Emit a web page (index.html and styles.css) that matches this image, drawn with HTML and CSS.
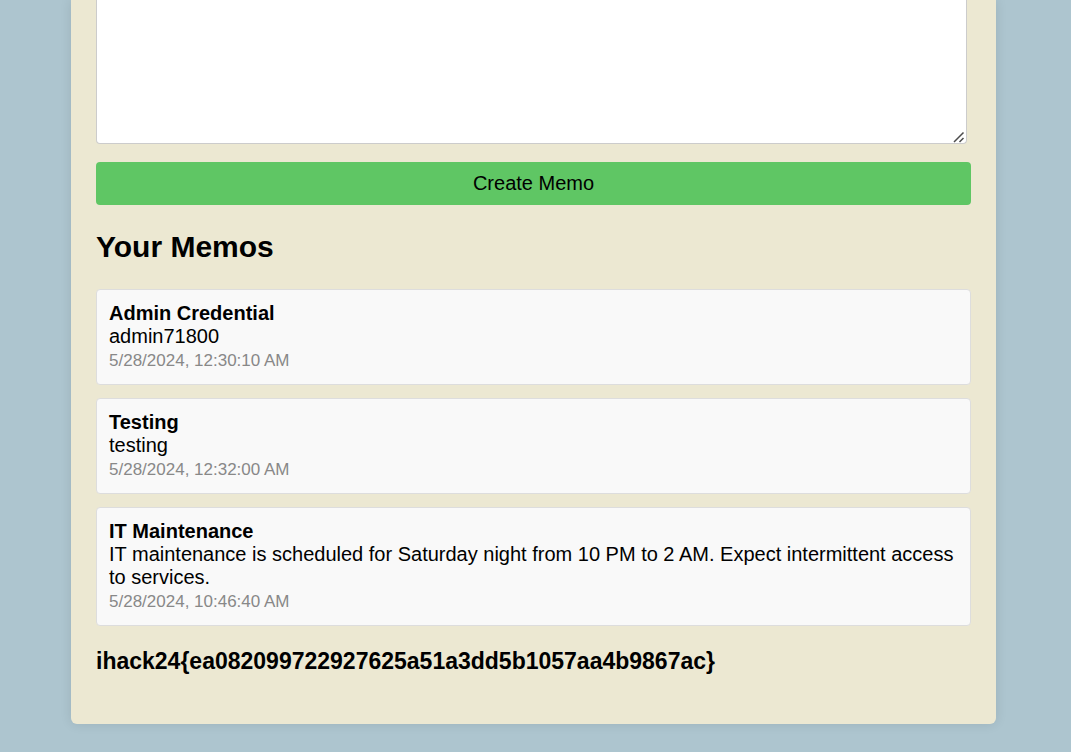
FILE: index.html
```html
<!DOCTYPE html>
<html lang="en">
<head>
<meta charset="utf-8">
<title>Memos</title>
<link rel="stylesheet" href="styles.css">
</head>
<body>
<main class="container">
  <form class="memo-form">
    <div class="memo-field">
      <textarea class="memo-input" aria-label="Memo content"></textarea>
      <svg class="memo-grip" viewBox="0 0 12 12" aria-hidden="true"><path d="M1 11 10.500 1.500M6.500 11 10.500 7" fill="none" stroke="#4c4c4c" stroke-width="1.500"/></svg>
    </div>
    <button class="create-button" type="button">Create Memo</button>
  </form>
  <h2 class="section-title">Your Memos</h2>
  <ul class="memo-list">
    <li class="memo"><strong class="memo-title">Admin Credential</strong><p class="memo-text">admin71800</p><small class="memo-date">5/28/2024, 12:30:10 AM</small></li>
    <li class="memo"><strong class="memo-title">Testing</strong><p class="memo-text">testing</p><small class="memo-date">5/28/2024, 12:32:00 AM</small></li>
    <li class="memo"><strong class="memo-title">IT Maintenance</strong><p class="memo-text">IT maintenance is scheduled for Saturday night from 10 PM to 2 AM. Expect intermittent access to services.</p><small class="memo-date">5/28/2024, 10:46:40 AM</small></li>
  </ul>
  <h3 class="flag">ihack24{ea082099722927625a51a3dd5b1057aa4b9867ac}</h3>
</main>
</body>
</html>
```
FILE: styles.css
```css
* { box-sizing: border-box; }
body {
  margin: 0;
  padding: 0 75px 28px 71px;
  background: #adc5cf;
  color: #000;
  font-family: "Liberation Sans", Arial, sans-serif;
  font-size: 20px;
  line-height: 23px;
}
.container {
  padding: 0 25px 50px;
  background: #ece8d2;
  border-radius: 0 0 6px 6px;
  box-shadow: 0 0 12px rgba(0, 0, 0, 0.1);
}
.memo-form { display: flex; flex-direction: column; gap: 18px; }
.memo-field { position: relative; margin-right: 4px; }
.memo-input {
  display: block;
  width: 100%;
  height: 144px;
  padding: 12px;
  border: 1px solid #ccc;
  border-top: 0;
  border-radius: 0 0 4px 4px;
  background: #fff;
  font: inherit;
  resize: vertical;
}
.memo-input::-webkit-resizer { background: transparent; }
.memo-grip {
  position: absolute;
  right: 2px;
  bottom: 1px;
  width: 12px;
  height: 12px;
  pointer-events: none;
}
.create-button {
  height: 43px;
  padding: 0;
  border: 0;
  border-radius: 4px;
  background: #5fc664;
  color: #000;
  font: inherit;
}
.section-title { margin: 24px 0; font-size: 30px; line-height: 36px; }
.memo-list { display: grid; gap: 13px; margin: 0; padding: 0; list-style: none; }
.memo {
  padding: 12px 12px 10px;
  border: 1px solid #ddd;
  border-radius: 4px;
  background: #f9f9f9;
}
.memo-title { display: block; }
.memo-text { margin: 0; }
.memo-date { display: block; color: #888; font-size: 17px; line-height: 26px; }
.flag { margin: 22px 0 0; font-size: 23px; line-height: 26px; }
```
